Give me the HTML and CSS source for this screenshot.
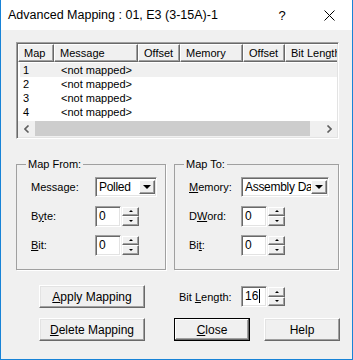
FILE: index.html
```html
<!DOCTYPE html>
<html lang="en">
<head>
    <meta charset="UTF-8">
    <meta name="viewport" content="width=device-width, initial-scale=1.0">
    <title>Advanced Mapping</title>
    <link rel="stylesheet" href="styles.css">
</head>
<body>
    <div class="window">
        <!-- Title bar -->
        <div class="titlebar">
            <span class="title">Advanced Mapping : 01, E3 (3-15A)-1</span>
            <span class="tb-help">?</span>
            <span class="tb-close">
                <svg width="11" height="11" viewBox="0 0 11 11"><path d="M0.5 0.5 L10.5 10.5 M10.5 0.5 L0.5 10.5" stroke="#000" stroke-width="1" fill="none"/></svg>
            </span>
        </div>

        <div class="client">
            <!-- Mapping list -->
            <div class="listview">
                <div class="lv-header">
                    <div class="hcell c-map">Map</div>
                    <div class="hcell c-msg">Message</div>
                    <div class="hcell c-off">Offset</div>
                    <div class="hcell c-mem">Memory</div>
                    <div class="hcell c-off">Offset</div>
                    <div class="hcell c-len">Bit Length</div>
                </div>
                <div class="lv-rows">
                    <div class="lv-row selected"><span class="c-map">1</span><span class="c-msg">&lt;not mapped&gt;</span></div>
                    <div class="lv-row"><span class="c-map">2</span><span class="c-msg">&lt;not mapped&gt;</span></div>
                    <div class="lv-row"><span class="c-map">3</span><span class="c-msg">&lt;not mapped&gt;</span></div>
                    <div class="lv-row"><span class="c-map">4</span><span class="c-msg">&lt;not mapped&gt;</span></div>
                </div>
                <div class="hscroll">
                    <span class="sarrow"><svg width="6" height="8" viewBox="0 0 6 8"><path d="M4.5 0.5 L1 4 L4.5 7.5" stroke="#606060" stroke-width="1.6" fill="none"/></svg></span>
                    <div class="strack"><div class="sthumb"></div></div>
                    <span class="sarrow"><svg width="6" height="8" viewBox="0 0 6 8"><path d="M1.5 0.5 L5 4 L1.5 7.5" stroke="#606060" stroke-width="1.6" fill="none"/></svg></span>
                </div>
            </div>

            <!-- Group boxes -->
            <div class="groups">
                <fieldset class="group g-from">
                    <legend>Map From:</legend>
                    <div class="field">
                        <span class="lbl">Message:</span>
                        <div class="combo c-small"><span class="combo-text">Polled</span><span class="combo-btn"><i class="tri-down"></i></span></div>
                    </div>
                    <div class="field">
                        <span class="lbl">B<u>y</u>te:</span>
                        <div class="spin"><span class="edit">0</span><span class="spin-btns"><span class="sbtn"><i class="tri-up"></i></span><span class="sbtn"><i class="tri-dn"></i></span></span></div>
                    </div>
                    <div class="field">
                        <span class="lbl"><u>B</u>it:</span>
                        <div class="spin"><span class="edit">0</span><span class="spin-btns"><span class="sbtn"><i class="tri-up"></i></span><span class="sbtn"><i class="tri-dn"></i></span></span></div>
                    </div>
                </fieldset>
                <fieldset class="group g-to">
                    <legend>Map To:</legend>
                    <div class="field">
                        <span class="lbl"><u>M</u>emory:</span>
                        <div class="combo c-wide"><span class="combo-text">Assembly Data</span><span class="combo-btn"><i class="tri-down"></i></span></div>
                    </div>
                    <div class="field">
                        <span class="lbl">D<u>W</u>ord:</span>
                        <div class="spin"><span class="edit">0</span><span class="spin-btns"><span class="sbtn"><i class="tri-up"></i></span><span class="sbtn"><i class="tri-dn"></i></span></span></div>
                    </div>
                    <div class="field">
                        <span class="lbl">Bi<u>t</u>:</span>
                        <div class="spin"><span class="edit">0</span><span class="spin-btns"><span class="sbtn"><i class="tri-up"></i></span><span class="sbtn"><i class="tri-dn"></i></span></span></div>
                    </div>
                </fieldset>
            </div>

            <!-- Buttons -->
            <div class="actions">
                <div class="act-row">
                    <button class="btn b-wide"><u>A</u>pply Mapping</button>
                    <span class="lbl len-lbl">Bit <u>L</u>ength:</span>
                    <div class="spin"><span class="edit">16<i class="caret"></i></span><span class="spin-btns"><span class="sbtn"><i class="tri-up"></i></span><span class="sbtn"><i class="tri-dn"></i></span></span></div>
                </div>
                <div class="act-row">
                    <button class="btn b-wide"><u>D</u>elete Mapping</button>
                    <button class="btn b-norm default"><u>C</u>lose</button>
                    <button class="btn b-norm">Help</button>
                </div>
            </div>
        </div>
    </div>
</body>
</html>
```

FILE: styles.css
```css
/* Dialog window */
body {
    margin: 0;
    padding: 0;
    background: #fff;
    font-family: "Liberation Sans", Arial, sans-serif;
    font-size: 11px;
    color: #000;
}

.window {
    width: 353px;
    height: 360px;
    box-sizing: border-box;
    border: 1px solid #1883d7;
    border-top: none;
    background: #f0f0f0;
    display: flex;
    flex-direction: column;
}

.titlebar {
    height: 30px;
    background: #fff;
    display: flex;
    align-items: center;
    padding-left: 7px;
    font-size: 12.5px;
}

.title {
    flex: 1;
    padding-bottom: 1px;
}

.tb-help {
    width: 46px;
    text-align: center;
    font-size: 13px;
    margin-right: 1px;
}

.tb-close {
    width: 46px;
    display: flex;
    justify-content: center;
    align-items: center;
}

.client {
    padding: 12px 0 0 15px;
}

/* List view */
.listview {
    width: 323px;
    height: 97px;
    box-sizing: border-box;
    border: 1px solid;
    border-color: #a0a0a0 #fff #fff #a0a0a0;
    box-shadow: inset 1px 1px 0 #696969, inset -1px -1px 0 #e3e3e3;
    background: #fff;
    padding: 1px;
    display: flex;
    flex-direction: column;
    overflow: hidden;
}

.lv-header {
    display: flex;
    height: 18px;
    flex-shrink: 0;
    overflow: hidden;
}

.hcell {
    flex-shrink: 0;
    box-sizing: border-box;
    background: #f0f0f0;
    border: 1px solid;
    border-color: #fff #696969 #696969 #fff;
    box-shadow: inset -1px -1px 0 #a0a0a0;
    padding: 2px 0 0 5px;
    white-space: nowrap;
    overflow: hidden;
}

.c-map { width: 36px; }
.c-msg { width: 84px; }
.c-off { width: 42px; }
.c-mem { width: 63px; }
.c-len { width: 66px; }

.lv-rows {
    flex: 1;
    padding-top: 1px;
}

.lv-row {
    display: flex;
    height: 14px;
    line-height: 14px;
    margin-left: 2px;
}

.lv-row span {
    flex-shrink: 0;
    box-sizing: border-box;
}

.lv-row .c-map {
    width: 34px;
    padding-left: 3px;
}

.lv-row .c-msg {
    padding-left: 7px;
}

.lv-row.selected {
    background: #f0f0f0;
}

.hscroll {
    height: 16px;
    display: flex;
    align-items: center;
    background: #f0f0f0;
    flex-shrink: 0;
}

.sarrow {
    width: 17px;
    display: flex;
    justify-content: center;
}

.strack {
    flex: 1;
    height: 16px;
    display: flex;
}

.sthumb {
    width: 275px;
    height: 15px;
    background: #cdcdcd;
}

/* Group boxes */
.groups {
    display: flex;
    gap: 8px;
    margin-top: 19px;
    width: 323px;
}

.group {
    margin: 0;
    padding: 7px 0 0 14px;
    border: 1px solid #a0a0a0;
    box-shadow: 1px 1px 0 #fff;
    box-sizing: border-box;
    display: flex;
    flex-direction: column;
    gap: 9px;
}

.g-from { width: 150px; height: 112px; }
.g-to { width: 165px; height: 112px; }

.group legend {
    padding: 0 2px;
    margin-left: -5px;
}

.field {
    display: flex;
    align-items: center;
    height: 20px;
}

.lbl {
    width: 64px;
    flex-shrink: 0;
}

.g-to .lbl { width: 52px; }

/* Combo box */
.combo {
    display: flex;
    height: 20px;
    box-sizing: border-box;
    border: 1px solid;
    border-color: #a0a0a0 #fff #fff #a0a0a0;
    box-shadow: inset 1px 1px 0 #696969, inset -1px -1px 0 #e3e3e3;
    background: #fff;
    padding: 2px 1px 2px 2px;
    font-size: 12px;
}

.c-small { width: 62px; }
.c-wide { width: 88px; }

.combo-text {
    flex: 1;
    padding-left: 1px;
    white-space: nowrap;
    overflow: hidden;
    line-height: 15px;
    letter-spacing: -0.3px;
}

.combo-btn {
    width: 16px;
    flex-shrink: 0;
    box-sizing: border-box;
    background: #f0f0f0;
    border: 1px solid;
    border-color: #fff #696969 #696969 #fff;
    box-shadow: inset -1px -1px 0 #a0a0a0;
    display: flex;
    align-items: center;
    justify-content: center;
}

.tri-down {
    width: 0;
    height: 0;
    border-left: 4px solid transparent;
    border-right: 4px solid transparent;
    border-top: 4px solid #000;
}

/* Spinner */
.spin {
    display: flex;
    height: 21px;
    gap: 1px;
}

.edit {
    width: 26px;
    box-sizing: border-box;
    border: 1px solid;
    border-color: #a0a0a0 #fff #fff #a0a0a0;
    box-shadow: inset 1px 1px 0 #696969, inset -1px -1px 0 #e3e3e3;
    background: #fff;
    padding: 2px 0 0 3px;
    font-size: 12px;
    display: flex;
    align-items: flex-start;
}

.caret {
    width: 1px;
    height: 14px;
    background: #000;
    margin-left: 1px;
}

.spin-btns {
    width: 17px;
    display: flex;
    flex-direction: column;
    padding: 1px 0;
    box-sizing: border-box;
}

.sbtn {
    flex: 1;
    box-sizing: border-box;
    background: #f0f0f0;
    border: 1px solid;
    border-color: #fff #696969 #696969 #fff;
    box-shadow: inset -1px -1px 0 #a0a0a0;
    display: flex;
    align-items: center;
    justify-content: center;
}

.tri-up {
    width: 0;
    height: 0;
    border-left: 2px solid transparent;
    border-right: 2px solid transparent;
    border-bottom: 2px solid #000;
}

.tri-dn {
    width: 0;
    height: 0;
    border-left: 2px solid transparent;
    border-right: 2px solid transparent;
    border-top: 2px solid #000;
}

/* Bottom buttons */
.actions {
    margin-top: 15px;
    display: flex;
    flex-direction: column;
    gap: 10px;
}

.act-row {
    display: flex;
    align-items: center;
    padding-left: 23px;
}

.len-lbl {
    margin-left: 34px;
    width: 62px;
}

.btn {
    font-family: "Liberation Sans", Arial, sans-serif;
    font-size: 12px;
    height: 23px;
    padding: 0;
    background: #f0f0f0;
    color: #000;
    border: 1px solid;
    border-color: #fff #696969 #696969 #fff;
    box-shadow: inset -1px -1px 0 #a0a0a0, inset 1px 1px 0 #e3e3e3;
}

.b-wide { width: 106px; }
.b-norm { width: 76px; }

.btn.default {
    margin-left: 29px;
    border: 1px solid #000;
    box-shadow: inset -1px -1px 0 #696969, inset 1px 1px 0 #fff, inset -2px -2px 0 #a0a0a0;
}

.btn.default + .btn {
    margin-left: 14px;
}
```
